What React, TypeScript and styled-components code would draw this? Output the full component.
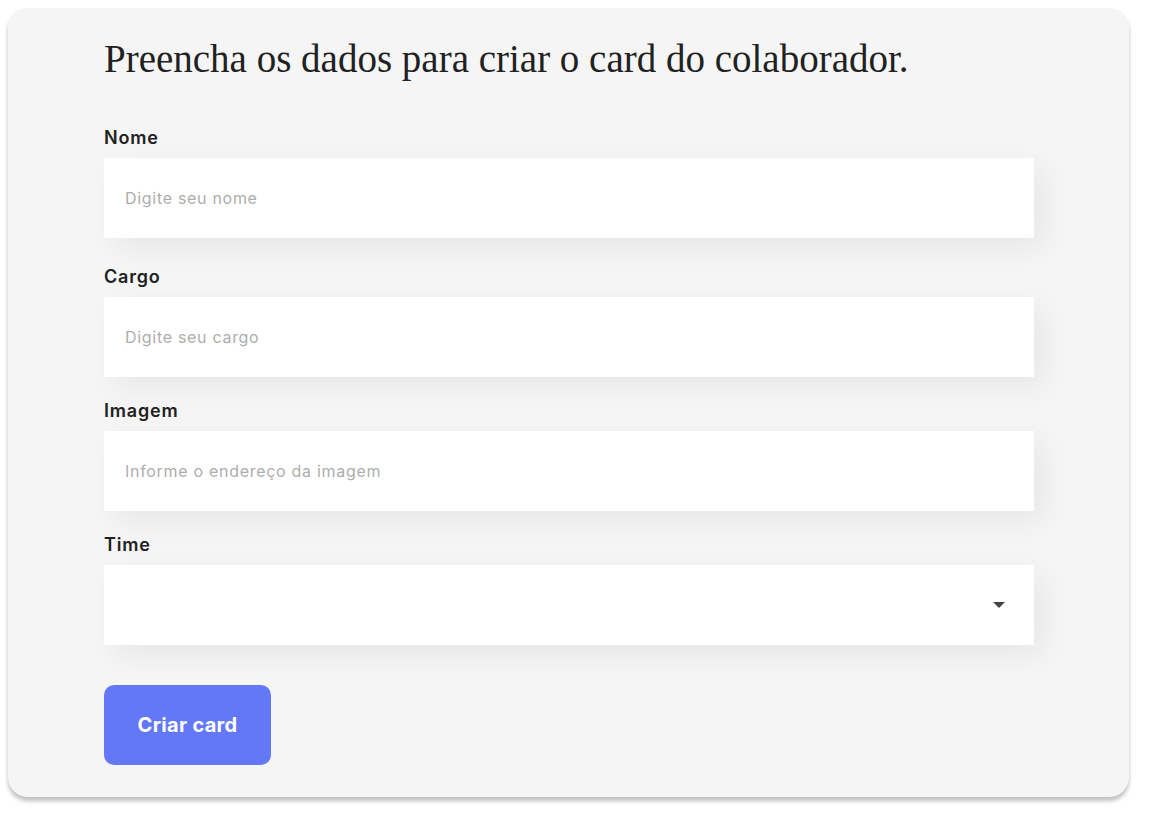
import React from "react";
import styled, { createGlobalStyle } from "styled-components";

const GlobalStyle = createGlobalStyle`
  html, body { margin: 0; padding: 0; background: #ffffff; }
  body { padding: 8px; font-family: "Inter", "Noto Sans", sans-serif; }
  * { box-sizing: border-box; }
`;

const Card = styled.section`
  width: 1121px;
  height: 789px;
  background: #f5f5f5;
  border-radius: 20px;
  box-shadow: 0 4px 4px rgba(0, 0, 0, 0.25);
  padding: 27px 96px 32px;
`;

const Form = styled.form`
  display: flex;
  flex-direction: column;
  width: 930px;
`;

const Title = styled.h2`
  margin: 0 0 44px;
  font-family: "Liberation Serif", "DejaVu Serif", serif;
  font-weight: 400;
  font-size: 39px;
  line-height: 48px;
  color: #212121;
`;

const Field = styled.div<{ $gap: number }>`
  display: flex;
  flex-direction: column;
  gap: 9px;
  margin-bottom: ${(p) => p.$gap}px;
`;

const Label = styled.label`
  font-family: "Inter", "Noto Sans", sans-serif;
  font-weight: 600;
  font-size: 18px;
  line-height: 22px;
  letter-spacing: 0.8px;
  color: #212121;
`;

const Input = styled.input`
  height: 80px;
  border: none;
  outline: none;
  background: #ffffff;
  padding: 0 21px;
  font-family: "Inter", "Noto Sans", sans-serif;
  font-size: 16px;
  letter-spacing: 0.7px;
  color: #212121;
  box-shadow: 10px 10px 30px rgba(0, 0, 0, 0.06);
  &::placeholder { color: #adadad; }
`;

const SelectBox = styled.div`
  position: relative;
  height: 80px;
  background: #ffffff;
  box-shadow: 10px 10px 30px rgba(0, 0, 0, 0.06);
`;

const Select = styled.select`
  width: 100%;
  height: 100%;
  border: none;
  outline: none;
  background: transparent;
  appearance: none;
  padding: 0 21px;
  font-family: "Inter", "Noto Sans", sans-serif;
  font-size: 16px;
`;

const Arrow = styled.svg`
  position: absolute;
  right: 28px;
  top: 36px;
  pointer-events: none;
`;

const Button = styled.button`
  align-self: flex-start;
  width: 167px;
  height: 80px;
  border: none;
  border-radius: 10px;
  background: #6278f7;
  color: #ffffff;
  font-family: "Inter", "Noto Sans", sans-serif;
  font-weight: 700;
  font-size: 20px;
  letter-spacing: 0.3px;
  cursor: pointer;
`;

export default function App() {
  return (
    <>
      <GlobalStyle />
      <Card>
        <Form onSubmit={(e) => e.preventDefault()}>
          <Title>Preencha os dados para criar o card do colaborador.</Title>
          <Field $gap={28}>
            <Label>Nome</Label>
            <Input placeholder="Digite seu nome" />
          </Field>
          <Field $gap={23}>
            <Label>Cargo</Label>
            <Input placeholder="Digite seu cargo" />
          </Field>
          <Field $gap={23}>
            <Label>Imagem</Label>
            <Input placeholder="Informe o endereço da imagem" />
          </Field>
          <Field $gap={40}>
            <Label>Time</Label>
            <SelectBox>
              <Select defaultValue="">
                <option value=""></option>
              </Select>
              <Arrow width="14" height="8" viewBox="0 0 14 8">
                <path d="M1 1 L13 1 L7 7 Z" fill="#444444" />
              </Arrow>
            </SelectBox>
          </Field>
          <Button type="submit">Criar card</Button>
        </Form>
      </Card>
    </>
  );
}
